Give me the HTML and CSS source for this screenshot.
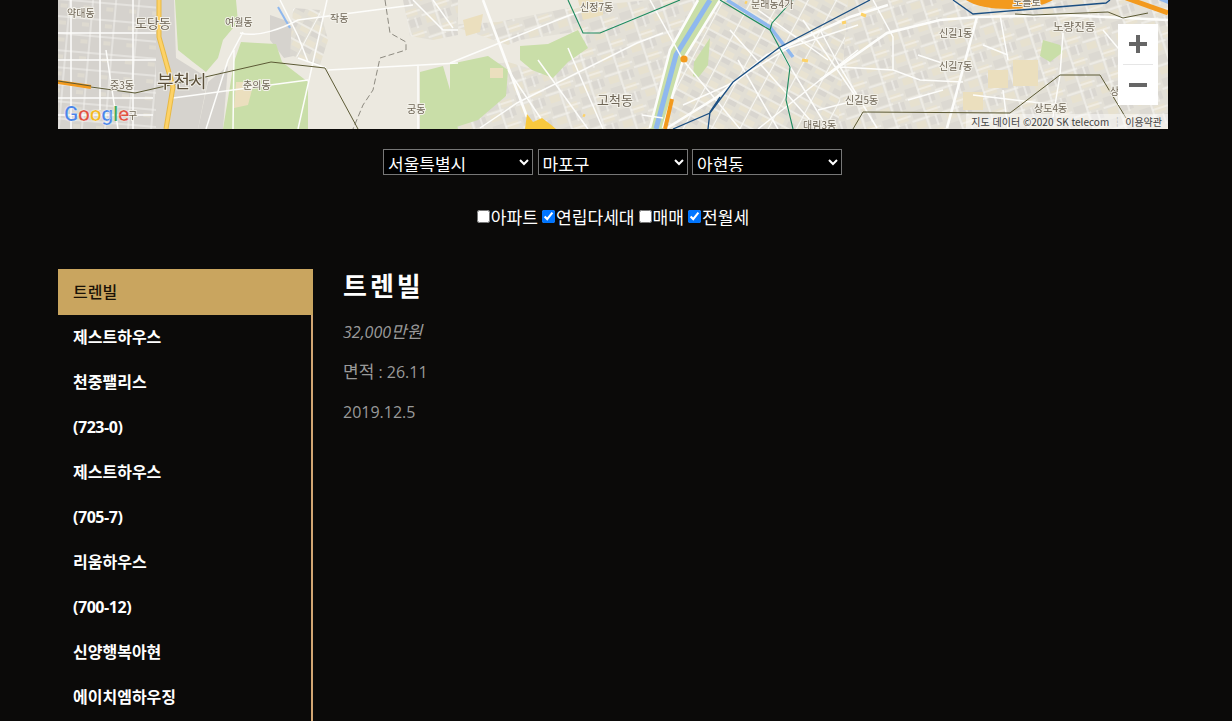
FILE: index.html
```html
<!DOCTYPE html>
<html lang="ko">
<head>
<meta charset="utf-8">
<title>부동산 지도</title>
<link rel="stylesheet" href="styles.css">
</head>
<body>
<div class="page">
  <div class="map">
    <svg class="map-art" viewBox="0 0 1110 129" width="1110" height="129" xmlns="http://www.w3.org/2000/svg">
      <defs>
        <pattern id="city" width="25" height="17" patternUnits="userSpaceOnUse" patternTransform="rotate(28)">
          <rect width="25" height="17" fill="#e2dfd5"/>
          <rect x="2" y="2" width="9" height="6" fill="#dad7d0"/>
          <rect x="14" y="2" width="9" height="6" fill="#e9e3d2"/>
          <rect x="2" y="10" width="9" height="5" fill="#e8e2d0"/>
          <rect x="14" y="10" width="9" height="5" fill="#d8d5cf"/>
          <path d="M0 9H25M12.5 0V17" stroke="#f8f7f3" stroke-width="1"/>
        </pattern>
        <pattern id="city2" width="31" height="23" patternUnits="userSpaceOnUse" patternTransform="rotate(-18)">
          <rect width="31" height="23" fill="#e3e0d7"/>
          <rect x="2" y="2" width="12" height="8" fill="#dcd9d2"/>
          <rect x="17" y="3" width="11" height="7" fill="#e8e2d1"/>
          <rect x="3" y="14" width="10" height="7" fill="#e7e1cf"/>
          <rect x="17" y="13" width="12" height="8" fill="#dad7d1"/>
          <path d="M0 12H18M15 0V23M15 6H31M24 12V23" stroke="#f8f7f3" stroke-width="1"/>
        </pattern>
        <pattern id="west" width="23" height="17" patternUnits="userSpaceOnUse" patternTransform="rotate(5)">
          <rect width="23" height="17" fill="#d5d2cd"/>
          <rect x="3" y="3" width="7" height="4" fill="#dedad0"/>
          <path d="M0 16H23M12 0V17" stroke="#f4f3ef" stroke-width="1"/>
        </pattern>
      </defs>
      <rect width="1110" height="129" fill="#ece9e0"/>
      <!-- built up areas -->
      <path class="fill-west" d="M0 0H98V129H0Z"/>
      <path class="fill-grey" d="M98 0H116L118 58L150 78L140 129H98Z"/>
      <path class="fill-grey" d="M212 15L232 22L240 55L226 58L212 40Z"/>
      <path class="fill-grey" d="M150 82L170 66L165 129H140Z"/>
      <path class="fill-city" d="M235 8L262 10L270 40L262 65L232 55Z"/>
      <path class="fill-city2" d="M345 0H400V35L375 40L352 36Z"/>
      <path class="fill-city2" d="M392 25L440 22L510 8L590 0H640L590 129H400L395 70L450 62L470 68L520 58L530 30L462 40L450 45Z"/>
      <path class="fill-city" d="M640 0H790L780 129H600Z"/>
      <path class="fill-city2" d="M790 0H1110V129H780Z"/>
      <!-- green -->
      <path class="park" d="M117 0H178L180 22L165 40L160 58L148 72L135 62L120 50Z"/>
      <path class="park" d="M176 62L183 42L218 44L224 62L250 82L250 129H165Z"/>
      <path class="park" d="M362 72L385 66L392 90L400 129H362Z"/>
      <path class="park" d="M392 64L430 56L450 70L448 96L420 120L392 129Z"/>
      <path class="park" d="M462 46L490 44L520 30L530 48L510 62L495 78L474 70L462 60Z"/>
      <path class="park" d="M636 62L652 38L650 65L640 78L635 76Z"/>
      <path class="park" d="M640 0H662L625 60L605 129H592L612 50Z"/>
      <path class="park" d="M985 40L1002 45L1005 52L992 62L982 56Z"/>
      <path class="sand" d="M930 70H950V88H930Z"/>
      <path class="sand" d="M955 60H980V86H955Z"/>
      <path class="sand" d="M905 92H925V110H905Z"/>
      <path class="sand" d="M178 82L196 82L190 105L176 108Z"/>
      <path class="sand" d="M405 20L425 14L422 32L408 36Z"/>
      <path class="sand" d="M520 0H545V15L525 20Z"/>
      <path class="sand" d="M432 68H445V78H432Z"/>
      <!-- water -->
      <path class="water" d="M652 0L618 55L598 129"/>
      <path class="water water-thin" d="M669 0L712 27L735 57"/>
      <path class="water-short" d="M220 7L232 28"/>
      <path class="water" d="M1102 -2L1112 2"/>
      <!-- minor roads -->
      <path class="road" d="M0 33H98M0 60H98M0 98H95M13 0V129M42 0V110M75 0V129M48 50L60 129M0 115H95"/>
      <path class="road" d="M182 33C200 38 225 28 240 20L355 5M269 0L240 129M222 0L240 36L250 62M185 32L170 60L148 129M176 50L175 129"/>
      <path class="road" d="M270 70L400 63M360 66V129M115 98L250 80M240 58L268 68"/>
      <path class="road" d="M355 0L385 30L400 30M375 0L395 28"/>
      <path class="road road-wide" d="M425 0L469 117"/>
      <path class="road" d="M392 63L449 40L512 15L552 3M422 128L459 103L525 70L579 43L605 33"/>
      <path class="road" d="M592 0L625 60L682 129M584 115L605 118"/>
      <path class="road" d="M480 60L530 129M510 48L545 129M450 70L490 129"/>
      <path class="road road-wide" d="M640 0L612 50L592 128M662 0L625 60L605 128"/>
      <path class="road road-wide" d="M609 128L659 97L709 55L792 17L830 5"/>
      <path class="road" d="M625 105L670 85L730 48L800 25M672 30L760 129M722 50L770 129M745 20L800 100M800 50L700 129M680 60L720 129M700 10L770 60"/>
      <path class="road road-wide" d="M919 17L889 128"/>
      <path class="road road-wide" d="M762 80L829 33L882 20L919 17L1005 15L1110 20"/>
      <path class="road" d="M815 0L835 37L835 70L862 80L905 82M762 30L782 67L802 100L819 128M782 67L835 70"/>
      <path class="road" d="M860 55L890 65M1005 33L1002 75L995 117M925 45L950 55M942 15L950 60M915 95L1000 105M1045 30L1070 60"/>
      <path class="road" d="M850 100L885 90M945 90L950 129M760 110L800 100"/>
      <!-- rails / boundaries -->
      <path class="dash" d="M327 0L332 33L348 42L348 50L322 58L315 90L305 105L295 129"/>
      <path class="olive" d="M33 87L77 93L213 62L267 68L300 129"/>
      <path class="olive" d="M795 129L805 112L952 113L1002 75L1042 75L1068 118"/>
      <!-- highways -->
      <path class="yellow-edge" d="M101 0V37L115 87L108 129"/>
      <path class="yellow" d="M101 0V37L115 87L108 129"/>
      <path class="orange" d="M0 82L33 87"/>
      <path class="black-line" d="M0 81L33 86"/>
      <path class="orange" d="M614 99L607 129"/>
      <circle cx="626" cy="59" r="3.6" fill="#f39a1e"/>
      <path class="orange-river" d="M908 0C925 12 975 12 995 0Z"/>
      <path class="orange orange-thick" d="M1068 -2L1110 13"/>
      <path class="yellow" d="M687 2L689 3M803 14L808 16M784 23L788 22M744 60L750 61M525 115L527 116"/>
      <path class="yellow-blob" d="M467 129L469 114L475 122L484 118L492 124L498 129Z"/>
      <!-- subway -->
      <path class="metro-green" d="M510 0L525 33L542 33L622 0"/>
      <path class="metro-green" d="M662 0L712 30L732 67L728 100L735 129M735 0L714 23L712 30"/>
      <path class="metro-navy" d="M812 0L722 47L675 82L652 113L615 129M662 97L652 112L650 129"/>
      <path class="metro-navy" d="M895 0L915 14L1048 3L1052 0"/>
      <path class="olive" d="M957 14L975 15L1050 12L1065 18L1090 13"/>
      <!-- labels -->
      <text class="lab" x="9" y="17">약대동</text>
      <text class="lab lab-m" x="77" y="28">도당동</text>
      <text class="lab" x="167" y="26">여월동</text>
      <text class="lab" x="272" y="22">작동</text>
      <text class="lab" x="52" y="89">중3동</text>
      <text class="lab lab-xl" x="99" y="88">부천시</text>
      <text class="lab" x="185" y="89">춘의동</text>
      <text class="lab" x="70" y="119">구</text>
      <text class="lab" x="349" y="113">궁동</text>
      <text class="lab" x="522" y="11">신정7동</text>
      <text class="lab lab-m" x="539" y="105">고척동</text>
      <text class="lab" x="693" y="8">문래동4가</text>
      <text class="lab" x="745" y="129">대림3동</text>
      <text class="lab" x="881" y="37">신길1동</text>
      <text class="lab" x="881" y="70">신길7동</text>
      <text class="lab" x="787" y="104">신길5동</text>
      <text class="lab" x="955" y="6">노들로</text>
      <text class="lab lab-m2" x="995" y="31">노량진동</text>
      <text class="lab" x="976" y="112">상도4동</text>
      <text class="lab" x="1052" y="95">상</text>
    </svg>
    <div class="zoom-ctl">
      <button class="zoom-btn" aria-label="확대">
        <svg width="20" height="20" viewBox="0 0 20 20"><path d="M1 10H19M10 1V19" stroke="#666" stroke-width="4" fill="none"/></svg>
      </button>
      <span class="zoom-sep"></span>
      <button class="zoom-btn" aria-label="축소">
        <svg width="20" height="20" viewBox="0 0 20 20"><path d="M1 10H19" stroke="#666" stroke-width="4" fill="none"/></svg>
      </button>
    </div>
    <div class="logo"><span class="g-b">G</span><span class="g-r">o</span><span class="g-y">o</span><span class="g-b">g</span><span class="g-g">l</span><span class="g-r">e</span></div>
    <div class="attr"><span>지도 데이터 ©2020 SK telecom</span><span class="attr-sep">┆</span><span>이용약관</span></div>
  </div>

  <div class="selects">
    <select class="sel"><option>서울특별시</option></select>
    <select class="sel"><option>마포구</option></select>
    <select class="sel"><option>아현동</option></select>
  </div>

  <div class="checks">
    <label class="chk"><input type="checkbox">아파트</label>
    <label class="chk"><input type="checkbox" checked>연립다세대</label>
    <label class="chk"><input type="checkbox">매매</label>
    <label class="chk"><input type="checkbox" checked>전월세</label>
  </div>

  <div class="main">
    <nav class="side">
      <a class="item active">트렌빌</a>
      <a class="item">제스트하우스</a>
      <a class="item">천중팰리스</a>
      <a class="item item-num">(723-0)</a>
      <a class="item">제스트하우스</a>
      <a class="item item-num">(705-7)</a>
      <a class="item">리움하우스</a>
      <a class="item item-num">(700-12)</a>
      <a class="item">신양행복아현</a>
      <a class="item">에이치엠하우징</a>
    </nav>
    <section class="detail">
      <h2 class="title">트렌빌</h2>
      <p class="price">32,000<span class="ko">만원</span></p>
      <p class="info"><span class="ko">면적</span> : 26.11</p>
      <p class="info">2019.12.5</p>
    </section>
  </div>
</div>
</body>
</html>
```
FILE: styles.css
```css
html, body {
  margin: 0;
  height: 721px;
  overflow: hidden;
  background: #0b0a09;
}
body {
  font-family: "Open Sans", "Noto Sans CJK KR", sans-serif;
  color: #fff;
}
.page {
  width: 1110px;
  margin-left: 58px;
}
.map {
  position: relative;
  height: 129px;
  overflow: hidden;
}
.map-art { display: block; filter: blur(.3px); }
.fill-west { fill: url(#west); }
.fill-city { fill: url(#city); }
.fill-city2 { fill: url(#city2); }
.fill-grey { fill: #d6d3ce; }
.park { fill: #c9dea8; }
.sand { fill: #ebdfbe; }
.water { fill: none; stroke: #8fb8ee; stroke-width: 5; }
.water-thin { stroke-width: 3.5; }
.water-short { fill: none; stroke: #8fb8ee; stroke-width: 2; }
.road { fill: none; stroke: #fdfdfb; stroke-width: 1.5; }
.road-wide { stroke-width: 2.6; }
.dash { fill: none; stroke: #8d8a80; stroke-width: 1; stroke-dasharray: 6 3; }
.olive { fill: none; stroke: #5c5a35; stroke-width: 1; }
.yellow-edge { fill: none; stroke: #e7b945; stroke-width: 5; }
.yellow { fill: none; stroke: #fdd267; stroke-width: 3; }
.yellow-blob { fill: #f8c93e; }
.orange { fill: none; stroke: #f39a1e; stroke-width: 4; }
.orange-thick { stroke-width: 5; }
.black-line { fill: none; stroke: #5c5a35; stroke-width: 1; }
.orange-river { fill: #f39a1e; }
.metro-green { fill: none; stroke: #1c8a5e; stroke-width: 1.1; }
.metro-navy { fill: none; stroke: #1b4f82; stroke-width: 1.3; }
.lab {
  font-family: "Noto Sans CJK KR", sans-serif;
  font-size: 10px;
  fill: #6f6657;
  stroke: #f3f1ea;
  stroke-width: 2px;
  paint-order: stroke;
}
.lab-m { font-size: 13px; }
.lab-m2 { font-size: 11.5px; }
.lab-xl { font-size: 18px; fill: #5b4f3a; }
.zoom-ctl {
  position: absolute;
  left: 1060px;
  top: 24px;
  width: 40px;
  height: 81px;
  background: #fff;
  display: flex;
  flex-direction: column;
  align-items: center;
}
.zoom-btn {
  width: 40px;
  height: 40px;
  padding: 0;
  border: 0;
  background: none;
  display: flex;
  align-items: center;
  justify-content: center;
}
.zoom-sep {
  width: 30px;
  height: 1px;
  background: #e6e6e6;
}
.logo {
  position: absolute;
  left: 6px;
  top: 99px;
  font-family: "Roboto", "Liberation Sans", sans-serif;
  font-size: 21px;
  font-weight: 500;
  line-height: 30px;
  letter-spacing: -.3px;
  -webkit-text-stroke: .2px #fff;
  text-shadow: 0 0 2px #fff;
}
.g-b { color: #4a84e8; }
.g-r { color: #e0503e; }
.g-y { color: #f3b81e; }
.g-g { color: #3fa757; }
.attr {
  position: absolute;
  right: 0;
  bottom: 0;
  display: flex;
  align-items: center;
  gap: 3px;
  height: 15px;
  padding: 0 6px 0 5px;
  background: rgba(255, 255, 255, .45);
  font-family: "Noto Sans CJK KR", sans-serif;
  font-size: 10px;
  line-height: 13px;
  color: #444;
  white-space: nowrap;
}
.attr-sep { color: #999; }
.selects {
  display: flex;
  justify-content: center;
  gap: 4.5px;
  margin-top: 20px;
  padding-right: 1px;
}
.sel {
  width: 150px;
  height: 26px;
  box-sizing: border-box;
  background: #000;
  color: #fff;
  border: 1px solid #777;
  border-radius: 0;
  padding: 0 0 2px;
  font-family: "Noto Sans CJK KR", sans-serif;
  font-size: 17px;
  line-height: 22px;
}
.checks {
  display: flex;
  justify-content: center;
  gap: 4px;
  margin-top: 29px;
  height: 25px;
  font-family: "Noto Sans CJK KR", sans-serif;
  font-size: 17.1px;
  line-height: 24px;
  color: #fff;
}
.chk { display: flex; align-items: center; }
.chk input { margin: 0 1px 0 0; width: 13px; height: 13px; }
.main {
  display: flex;
  margin-top: 40px;
}
.side {
  width: 255px;
  box-sizing: border-box;
  border-right: 2px solid #d2a673;
  flex: none;
  height: 460px;
}
.item {
  display: block;
  height: 45px;
  line-height: 45px;
  padding-left: 15px;
  font-family: "Noto Sans CJK KR", sans-serif;
  font-size: 16px;
  font-weight: 700;
  color: #fff;
  white-space: nowrap;
}
.item-num {
  font-family: "Open Sans", sans-serif;
  font-size: 16px;
  line-height: 47px;
  letter-spacing: -.45px;
}
.item.active {
  background: #c9a55f;
  color: #1a1207;
  font-weight: 500;
  margin-right: -2px;
  height: 46px;
  margin-bottom: -1px;
}
.detail {
  padding-left: 30px;
  color: #999;
}
.title {
  margin: 0;
  height: 34px;
  font-family: "Liberation Serif", "Noto Sans CJK KR", serif;
  font-size: 26px;
  line-height: 38px;
  font-weight: 700;
  color: #fff;
  letter-spacing: 3px;
}
.ko { font-size: 17px; }
.price, .info {
  margin: 0;
  font-size: 16px;
  line-height: 24px;
  height: 24px;
}
.price { margin-top: 17px; font-style: italic; }
.info { margin-top: 16px; }
```
